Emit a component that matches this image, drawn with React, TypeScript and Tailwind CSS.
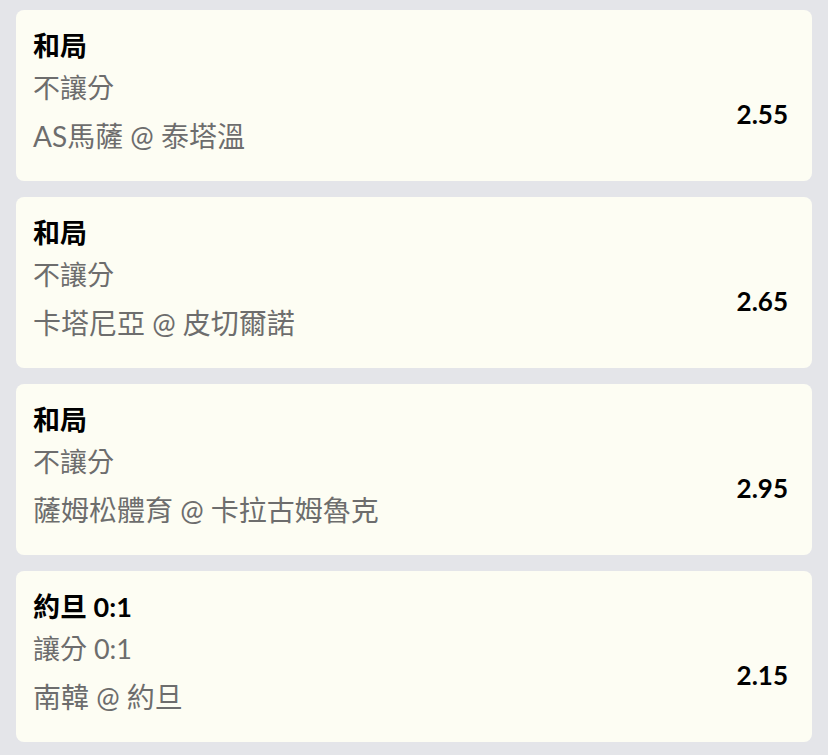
const bets = [
  { title: "和局", market: "不讓分", match: "AS馬薩 @ 泰塔溫", odds: "2.55" },
  { title: "和局", market: "不讓分", match: "卡塔尼亞 @ 皮切爾諾", odds: "2.65" },
  { title: "和局", market: "不讓分", match: "薩姆松體育 @ 卡拉古姆魯克", odds: "2.95" },
  { title: "約旦 0:1", market: "讓分 0:1", match: "南韓 @ 約旦", odds: "2.15" },
];

export default function App() {
  return (
    <div className="min-h-screen bg-[#e4e5e9] px-4 py-[10px] font-['Lato','Noto_Sans_CJK_TC',sans-serif]">
      <div className="flex flex-col gap-4">
        {bets.map((bet, i) => (
          <div
            key={i}
            className="flex h-[171px] items-center justify-between rounded-lg bg-[#fdfdf3] pl-[17px] pr-6"
          >
            <div className="flex flex-col pb-2">
              <div className="text-[27px] font-bold leading-[42px] text-black">
                {bet.title}
              </div>
              <div className="text-[27px] leading-[42px] text-[#6d6d6d]">
                {bet.market}
              </div>
              <div className="mt-[4px] text-[28px] leading-[46px] text-[#6d6d6d]">
                {bet.match}
              </div>
            </div>
            <div className="pt-9 text-[26px] font-bold leading-none text-black">
              {bet.odds}
            </div>
          </div>
        ))}
      </div>
    </div>
  );
}
